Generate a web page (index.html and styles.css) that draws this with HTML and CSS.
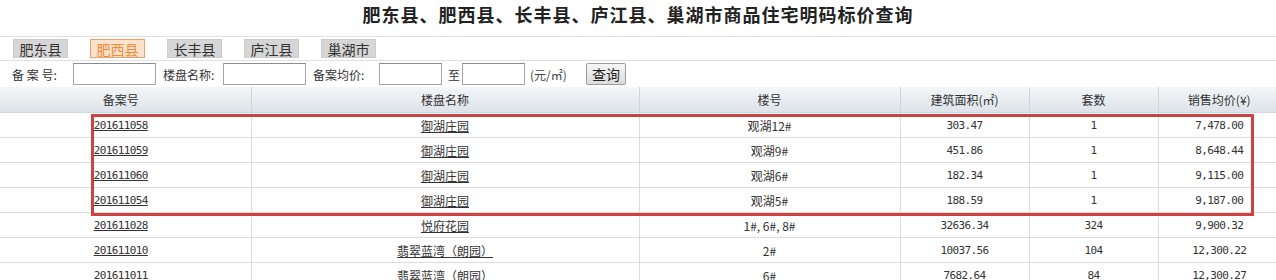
FILE: index.html
```html
<!DOCTYPE html>
<html lang="zh-CN">
<head>
    <meta charset="UTF-8">
    <title>商品住宅明码标价查询</title>
    <link rel="stylesheet" href="styles.css">
</head>
<body>

    <h1 class="title">肥东县、肥西县、长丰县、庐江县、巢湖市商品住宅明码标价查询</h1>

    <div class="tabs">
        <a class="tab">肥东县</a>
        <a class="tab active">肥西县</a>
        <a class="tab">长丰县</a>
        <a class="tab">庐江县</a>
        <a class="tab">巢湖市</a>
    </div>

    <form class="search">
        <label class="lbl lbl-no">备 案 号:</label>
        <input type="text" class="box">
        <label class="lbl lbl-name">楼盘名称:</label>
        <input type="text" class="box">
        <label class="lbl lbl-price">备案均价:</label>
        <input type="text" class="box box-sm">
        <label class="lbl lbl-to">至</label>
        <input type="text" class="box box-sm">
        <span class="unit">(元/㎡)</span>
        <button type="button" class="btn">查询</button>
    </form>

    <div class="list-wrap">
        <table class="list">
            <colgroup>
                <col style="width:251px">
                <col style="width:388px">
                <col style="width:261px">
                <col style="width:129px">
                <col style="width:129px">
                <col style="width:122px">
            </colgroup>
            <thead>
                <tr>
                    <th class="first">备案号</th>
                    <th>楼盘名称</th>
                    <th>楼号</th>
                    <th>建筑面积(㎡)</th>
                    <th>套数</th>
                    <th>销售均价(¥)</th>
                </tr>
            </thead>
            <tbody>
                <tr>
                    <td class="first num"><a href="#">201611058</a></td>
                    <td><a href="#">御湖庄园</a></td>
                    <td>观湖12#</td>
                    <td class="num">303.47</td>
                    <td class="num">1</td>
                    <td class="num">7,478.00</td>
                </tr>
                <tr>
                    <td class="first num"><a href="#">201611059</a></td>
                    <td><a href="#">御湖庄园</a></td>
                    <td>观湖9#</td>
                    <td class="num">451.86</td>
                    <td class="num">1</td>
                    <td class="num">8,648.44</td>
                </tr>
                <tr>
                    <td class="first num"><a href="#">201611060</a></td>
                    <td><a href="#">御湖庄园</a></td>
                    <td>观湖6#</td>
                    <td class="num">182.34</td>
                    <td class="num">1</td>
                    <td class="num">9,115.00</td>
                </tr>
                <tr>
                    <td class="first num"><a href="#">201611054</a></td>
                    <td><a href="#">御湖庄园</a></td>
                    <td>观湖5#</td>
                    <td class="num">188.59</td>
                    <td class="num">1</td>
                    <td class="num">9,187.00</td>
                </tr>
                <tr>
                    <td class="first num"><a href="#">201611028</a></td>
                    <td><a href="#">悦府花园</a></td>
                    <td>1#, 6#, 8#</td>
                    <td class="num">32636.34</td>
                    <td class="num">324</td>
                    <td class="num">9,900.32</td>
                </tr>
                <tr>
                    <td class="first num"><a href="#">201611010</a></td>
                    <td><a href="#">翡翠蓝湾（朗园）</a></td>
                    <td>2#</td>
                    <td class="num">10037.56</td>
                    <td class="num">104</td>
                    <td class="num">12,300.22</td>
                </tr>
                <tr>
                    <td class="first num"><a href="#">201611011</a></td>
                    <td><a href="#">翡翠蓝湾（朗园）</a></td>
                    <td>6#</td>
                    <td class="num">7682.64</td>
                    <td class="num">84</td>
                    <td class="num">12,300.27</td>
                </tr>
            </tbody>
        </table>
        <div class="mark"></div>
    </div>

</body>
</html>
```

FILE: styles.css
```css
/* query page */
body {
    margin: 0;
    font-family: "Noto Sans CJK SC", sans-serif;
    font-size: 12px;
    color: #333;
    background: #fff;
    overflow: hidden;
}
.title {
    margin: 0;
    height: 36px;
    line-height: 29px;
    border-bottom: 1px solid #e0e0e0;
    text-align: center;
    font-size: 18px;
    font-weight: bold;
    letter-spacing: 1px;
    color: #222;
}
.tabs {
    display: flex;
    gap: 22px;
    height: 24px;
    padding: 2px 0 0 13px;
    box-sizing: border-box;
    border-bottom: 1px solid #e0e0e0;
}
.tab {
    width: 55px;
    height: 19px;
    line-height: 18px;
    box-sizing: border-box;
    border: 1px solid #ccc;
    background: #d6d6d6;
    text-align: center;
    font-size: 14px;
    color: #333;
}
.tab.active {
    border-color: #efa066;
    background: #fde3cc;
    color: #f08a3c;
}
.search {
    display: flex;
    align-items: center;
    height: 26px;
    padding: 0 0 0 12px;
}
.lbl {
    display: block;
}
.lbl-no { width: 61px; }
.lbl-name { width: 60px; margin-left: 7px; }
.lbl-price { width: 66px; margin-left: 7px; }
.lbl-to { width: 14px; margin-left: 6px; }
.box {
    width: 83px;
    height: 22px;
    margin: 0;
    padding: 0 2px;
    box-sizing: border-box;
    border: 1px solid #a5a5a5;
    border-top-color: #8c8c8c;
    background: #fff;
}
.box-sm { width: 63px; }
.unit {
    width: 56px;
    margin-left: 5px;
    color: #444;
}
.btn {
    width: 40px;
    height: 22px;
    padding: 0;
    border: 1px solid #9c9c9c;
    border-radius: 2px;
    background: linear-gradient(#f6f6f6, #dcdcdc);
    font-family: "Noto Sans CJK SC", sans-serif;
    font-size: 14px;
    line-height: 18px;
    color: #222;
}
.list-wrap {
    position: relative;
    overflow: hidden;
}
.list {
    width: 1280px;
    table-layout: fixed;
    border-collapse: collapse;
}
.list th {
    height: 25px;
    padding: 0;
    font-weight: normal;
    line-height: 16px;
    background: linear-gradient(#f4f6f8, #dde3e9);
    border-left: 1px solid #cfd5dc;
    border-bottom: 1px solid #d3d8de;
    text-align: center;
}
.list td {
    height: 22px;
    padding: 2px 0 0;
    line-height: 16px;
    border-left: 1px solid #dcdcdc;
    border-bottom: 1px solid #dcdcdc;
    text-align: center;
}
.list .first {
    border-left: none;
    padding-right: 9px;
}
.list .num {
    font-family: "DejaVu Sans Mono", "Noto Sans CJK SC", monospace;
    font-size: 11px;
    letter-spacing: -0.6px;
}
.list a {
    color: #333;
    text-decoration: underline;
}
.mark {
    position: absolute;
    left: 91px;
    top: 27px;
    width: 1163px;
    height: 102px;
    box-sizing: border-box;
    border: 3px solid #cf4242;
}
```
